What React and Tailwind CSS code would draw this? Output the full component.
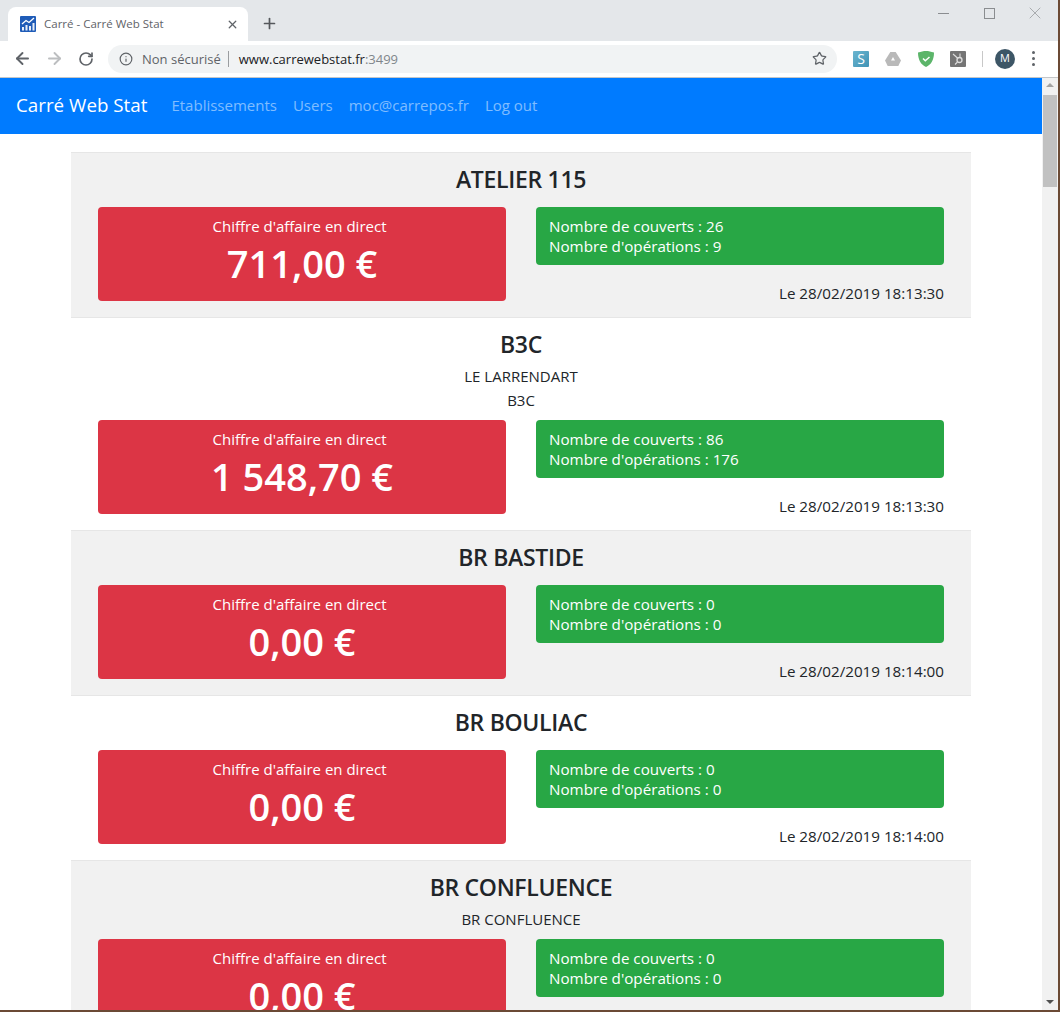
import { ArrowLeft, ArrowRight, RotateCw, Info, Star, Plus, X } from "lucide-react";

const shops = [
  { name: "ATELIER 115", lines: [], amount: "711,00 €", covers: 26, ops: 9, date: "Le 28/02/2019 18:13:30" },
  { name: "B3C", lines: ["LE LARRENDART", "B3C"], amount: "1 548,70 €", covers: 86, ops: 176, date: "Le 28/02/2019 18:13:30" },
  { name: "BR BASTIDE", lines: [], amount: "0,00 €", covers: 0, ops: 0, date: "Le 28/02/2019 18:14:00" },
  { name: "BR BOULIAC", lines: [], amount: "0,00 €", covers: 0, ops: 0, date: "Le 28/02/2019 18:14:00" },
  { name: "BR CONFLUENCE", lines: ["BR CONFLUENCE"], amount: "0,00 €", covers: 0, ops: 0, date: "Le 28/02/2019 18:14:00" },
];

function Favicon() {
  return (
    <svg width="16" height="16" viewBox="0 0 16 16" className="shrink-0">
      <rect width="16" height="16" rx="1" fill="#1f5cb8" />
      <path d="M2 8 L6 4.500 L9 6.500 L14 2" fill="none" stroke="#fff" strokeWidth="1.300" />
      <path d="M2 11h2v3.500H2zM5.500 9h2v5.500h-2zM9 10h2v4.500H9zM12.500 7h2v7.500h-2z" fill="#e8eef8" />
    </svg>
  );
}

function Extensions() {
  return (
    <div className="flex items-center">
      <div className="w-4 h-4 ml-[16px] flex items-center justify-center bg-gradient-to-br from-[#6ab5cf] to-[#3f93b5] rounded-[1px] text-white text-[14px] leading-none font-medium">S</div>
      <svg width="16" height="14" viewBox="0 0 16 14" className="ml-[16px]">
        <path d="M5.300 0h5.400L16 8.500 13.300 14H2.700L0 8.500z" fill="#b9b9b9" />
        <path d="M8 5l2 3.500H6z" fill="#fff" />
      </svg>
      <svg width="16" height="16" viewBox="0 0 16 16" className="ml-[17px]">
        <path d="M8 0c2.500 0 5 .6 8 1.600C16 9 13 14 8 16 3 14 0 9 0 1.600 3 .6 5.500 0 8 0z" fill="#5cb56a" />
        <path d="M5 7.500l2.300 2.300L11.500 6" fill="none" stroke="#fff" strokeWidth="1.500" />
      </svg>
      <svg width="16" height="16" viewBox="0 0 16 16" className="ml-[16px]">
        <rect width="16" height="16" rx="1" fill="#757575" />
        <circle cx="9.500" cy="9" r="2.500" fill="none" stroke="#ddd" strokeWidth="1.300" />
        <path d="M3 3l5 4.500M10 2.500v4M7.500 11l-2.500 2.500" stroke="#ddd" strokeWidth="1.100" />
      </svg>
      <div className="w-px h-4 bg-[#c8c8c8] ml-[16px]" />
      <div className="w-5 h-5 ml-[12px] rounded-full bg-[#3d5666] text-white text-[11px] flex items-center justify-center">M</div>
      <div className="ml-[17px] flex flex-col gap-[3px]">
        <span className="w-[3px] h-[3px] rounded-full bg-[#5f6368]" />
        <span className="w-[3px] h-[3px] rounded-full bg-[#5f6368]" />
        <span className="w-[3px] h-[3px] rounded-full bg-[#5f6368]" />
      </div>
    </div>
  );
}

function BrowserBar() {
  return (
    <header className="shrink-0 font-['Open_Sans',sans-serif]">
      <div className="h-[41px] bg-[#e4e7ea] flex items-end relative">
        <div className="ml-2 w-[240px] h-[34px] bg-white rounded-t-lg flex items-center pl-3 pr-[9px]">
          <Favicon />
          <span className="ml-2 text-[11.500px] text-[#5f6368] flex-1">Carré - Carré Web Stat</span>
          <X size={13} strokeWidth={2.4} className="text-[#5f6368]" />
        </div>
        <Plus size={17} strokeWidth={2.4} className="ml-[13px] mb-[9px] text-[#55585c]" />
        {/* window controls */}
        <div className="absolute right-[13px] top-[3px] flex items-center gap-[35px] text-[#8a8d90]">
          <div className="w-[11px] h-px bg-[#8a8d90]" />
          <div className="w-[11px] h-[11px] border border-[#8a8d90]" />
          <X size={20} strokeWidth={0.8} className="-ml-[5px]" />
        </div>
      </div>
      <div className="h-[37px] bg-white border-b border-[#c4c6c8] flex items-center pb-px">
        <ArrowLeft size={19} strokeWidth={2.400} className="ml-[13px] text-[#5f6368]" />
        <ArrowRight size={19} strokeWidth={2.400} className="ml-[13px] text-[#bcbec0]" />
        <RotateCw size={16} strokeWidth={2.500} className="ml-[14px] text-[#5f6368]" />
        <div className="ml-[14px] w-[729px] h-[28px] rounded-full bg-[#f1f3f4] flex items-center pl-[11px] pr-[10px]">
          <Info size={14} strokeWidth={2} className="text-[#5f6368]" />
          <span className="ml-[9px] text-[13px] leading-[20px] pt-px text-[#5f6368]">Non sécurisé</span>
          <div className="w-px h-4 bg-[#9a9da0] ml-[7px]" />
          <span className="ml-[10px] text-[13px] leading-[20px] pt-px text-[#202124]">www.carrewebstat.fr<span className="text-[#80868b]">:3499</span></span>
          <Star size={15} strokeWidth={2} className="ml-auto text-[#5f6368]" />
        </div>
        <Extensions />
      </div>
    </header>
  );
}

function ShopCard({ shop, shaded, first }) {
  return (
    <article className={`border-b border-[#e6e6e6] pt-[8px] pb-[12px] px-[27px] ${shaded ? "bg-[#f1f1f1]" : "bg-white"} ${first ? "border-t" : ""}`}>
      <h2 className="text-[23px] leading-[36px] font-semibold tracking-[-0.3px] text-[#212529] text-center mb-[10px]">{shop.name}</h2>
      {shop.lines.length > 0 && (
        <div className="-mt-[8px] mb-[8px]">
          {shop.lines.map((line, i) => (
            <p key={i} className="text-[15px] leading-[24px] text-[#212529] text-center">{line}</p>
          ))}
        </div>
      )}
      <div className="grid grid-cols-2 gap-[30px] items-start">
        <div className="h-[94px] rounded bg-[#dc3545] text-white text-center pt-[7px]">
          <div className="text-[15px] leading-[24px] pr-[5px]">Chiffre d'affaire en direct</div>
          <div className="text-[38px] leading-[50px] font-semibold">{shop.amount}</div>
        </div>
        <div>
          <div className="h-[58px] rounded bg-[#28a745] text-white px-[13px] py-[9px] text-[15.200px] leading-[20px]">
            <div>Nombre de couverts : {shop.covers}</div>
            <div>Nombre d'opérations : {shop.ops}</div>
          </div>
          <div className="mt-[16px] text-[15.200px] leading-[24px] text-[#212529] text-right">{shop.date}</div>
        </div>
      </div>
    </article>
  );
}

export default function App() {
  return (
    <div className="w-[1060px] h-[1012px] overflow-hidden bg-[#6b4a35] pr-[2px] pb-[2px]">
      <div className="h-full flex flex-col bg-white overflow-hidden">
        <BrowserBar />
        <div className="flex-1 flex min-h-0">
          <main className="flex-1 min-w-0 overflow-hidden font-['Open_Sans',sans-serif]">
            <nav className="h-[56px] bg-[#007bff] flex items-center pl-4 pb-px">
              <span className="text-[18.800px] text-white mr-[24px]">Carré Web Stat</span>
              <div className="flex gap-4 text-[15px] text-white/50">
                <a>Etablissements</a>
                <a>Users</a>
                <a>moc@carrepos.fr</a>
                <a>Log out</a>
              </div>
            </nav>
            <div className="w-[900px] mx-auto mt-[18px]">
              {shops.map((shop, i) => (
                <ShopCard key={shop.name} shop={shop} shaded={i % 2 === 0} first={i === 0} />
              ))}
            </div>
          </main>
          {/* scrollbar */}
          <div className="w-[16px] shrink-0 bg-[#f1f1f1] flex flex-col items-center relative">
            <div className="mt-[5px] w-0 h-0 border-x-[4px] border-x-transparent border-b-[4px] border-b-[#a3a3a3]" />
            <div className="mt-[8px] w-[14px] h-[92px] bg-[#c1c1c1]" />
            <div className="absolute bottom-[6px] w-0 h-0 border-x-[4px] border-x-transparent border-t-[4px] border-t-[#505050]" />
          </div>
        </div>
      </div>
    </div>
  );
}
